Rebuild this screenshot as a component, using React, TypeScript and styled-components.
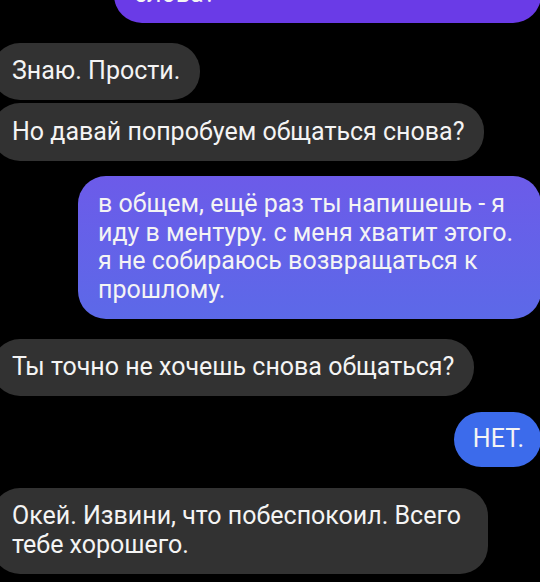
import React from "react";
import styled, { createGlobalStyle } from "styled-components";

const Global = createGlobalStyle`
  html, body { margin: 0; padding: 0; background: #000; }
  body { font-family: Roboto, "Noto Sans", "Liberation Sans", sans-serif; overflow: hidden; }
`;

const Screen = styled.div`
  width: 540px;
  height: 582px;
  background: #000;
  display: flex;
  flex-direction: column;
  overflow: hidden;
`;

const Row = styled.div<{ $out?: boolean; $gap: number }>`
  display: flex;
  justify-content: ${(p) => (p.$out ? "flex-end" : "flex-start")};
  margin-top: ${(p) => p.$gap}px;
  margin-left: ${(p) => (p.$out ? 0 : -8)}px;
  margin-right: ${(p) => (p.$out ? -1 : 0)}px;
`;

const Bubble = styled.div<{ $bg: string; $w?: number; $max?: number; $py?: number }>`
  background: ${(p) => p.$bg};
  color: #f4f4f4;
  font-size: 25px;
  line-height: 28.5px;
  padding: ${(p) => p.$py ?? 14.5}px 20px;
  border-radius: 28px;
  box-sizing: border-box;
  ${(p) => (p.$w ? `width: ${p.$w}px;` : "")}
  ${(p) => (p.$max ? `max-width: ${p.$max}px;` : "")}
`;

const GREY = "#323232";

export default function App() {
  return (
    <Screen>
      <Global />
      <Row $out $gap={-35}>
        <Bubble $bg="#6a3be7" $w={427}>слова?</Bubble>
      </Row>
      <Row $gap={20}>
        <Bubble $bg={GREY}>Знаю. Прости.</Bubble>
      </Row>
      <Row $gap={3}>
        <Bubble $bg={GREY}>Но давай попробуем общаться снова?</Bubble>
      </Row>
      <Row $out $gap={15}>
        <Bubble $bg="linear-gradient(180deg, #6c5be9 0%, #5c69e8 100%)" $w={463}>
          в общем, ещё раз ты напишешь - я иду в ментуру. с меня хватит этого. я не собираюсь возвращаться к прошлому.
        </Bubble>
      </Row>
      <Row $gap={20}>
        <Bubble $bg={GREY}>Ты точно не хочешь снова общаться?</Bubble>
      </Row>
      <Row $out $gap={16}>
        <Bubble $bg="#3c6beb" $py={13} style={{ paddingRight: 17, paddingLeft: 19 }}>
          НЕТ.
        </Bubble>
      </Row>
      <Row $gap={21}>
        <Bubble $bg={GREY} $max={496}>
          Окей. Извини, что побеспокоил. Всего тебе хорошего.
        </Bubble>
      </Row>
    </Screen>
  );
}
